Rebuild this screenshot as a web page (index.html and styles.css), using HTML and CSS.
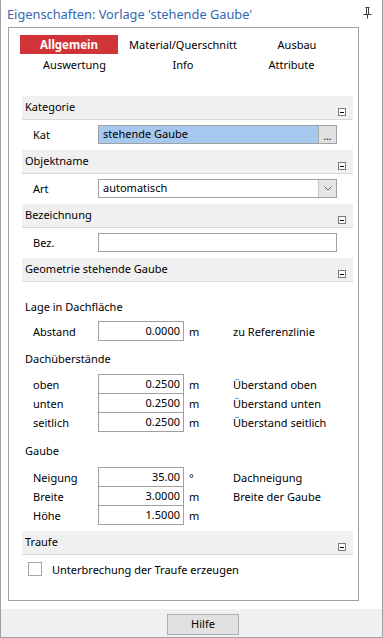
FILE: index.html
```html
<!DOCTYPE html>
<html lang="de">
<head>
<meta charset="utf-8">
<title>Eigenschaften</title>
<link rel="stylesheet" href="styles.css">
</head>
<body>
<div class="window">
  <div class="titlebar">
    <span class="title">Eigenschaften: Vorlage 'stehende Gaube'</span>
    <svg class="pin" width="9" height="12" viewBox="0 0 9 12">
      <path d="M2.5 0.5h4M3.5 0.5v7M5.5 0.5v7M0.5 7.5h8M4.5 7.5v4" stroke="#404040" stroke-width="1" fill="none"/>
    </svg>
  </div>
  <div class="panel">
    <div class="tabs">
      <div class="tab active">Allgemein</div>
      <div class="tab">Material/Querschnitt</div>
      <div class="tab">Ausbau</div>
      <div class="tab shift-r">Auswertung</div>
      <div class="tab">Info</div>
      <div class="tab shift-l">Attribute</div>
    </div>
    <div class="sections">
      <div class="sec-head"><span>Kategorie</span><span class="toggle"></span></div>
      <div class="prop-row">
        <span class="lbl">Kat</span>
        <div class="field">
          <span class="fill">stehende Gaube</span>
          <span class="dots">...</span>
        </div>
      </div>
      <div class="sec-head"><span>Objektname</span><span class="toggle"></span></div>
      <div class="prop-row">
        <span class="lbl">Art</span>
        <div class="field">
          <span class="val">automatisch</span>
          <span class="arrow">
            <svg width="8" height="5" viewBox="0 0 8 5"><path d="M0.5 0.5l3.5 3.5l3.5-3.5" stroke="#606060" fill="none"/></svg>
          </span>
        </div>
      </div>
      <div class="sec-head"><span>Bezeichnung</span><span class="toggle"></span></div>
      <div class="prop-row">
        <span class="lbl">Bez.</span>
        <div class="field"></div>
      </div>
      <div class="sec-head"><span>Geometrie stehende Gaube</span><span class="toggle"></span></div>
      <div class="group">
        <div class="group-title g-lage">Lage in Dachfläche</div>
        <div class="num-rows r-lage">
          <div class="num-row"><span class="lbl">Abstand</span><span class="num">0.0000</span><span class="unit">m</span><span class="desc">zu Referenzlinie</span></div>
        </div>
        <div class="group-title g-dach">Dachüberstände</div>
        <div class="num-rows r-dach">
          <div class="num-row"><span class="lbl">oben</span><span class="num">0.2500</span><span class="unit">m</span><span class="desc">Überstand oben</span></div>
          <div class="num-row"><span class="lbl">unten</span><span class="num">0.2500</span><span class="unit">m</span><span class="desc">Überstand unten</span></div>
          <div class="num-row"><span class="lbl">seitlich</span><span class="num">0.2500</span><span class="unit">m</span><span class="desc">Überstand seitlich</span></div>
        </div>
        <div class="group-title g-gaube">Gaube</div>
        <div class="num-rows r-gaube">
          <div class="num-row"><span class="lbl">Neigung</span><span class="num">35.00</span><span class="unit">°</span><span class="desc">Dachneigung</span></div>
          <div class="num-row"><span class="lbl">Breite</span><span class="num">3.0000</span><span class="unit">m</span><span class="desc">Breite der Gaube</span></div>
          <div class="num-row"><span class="lbl">Höhe</span><span class="num">1.5000</span><span class="unit">m</span><span class="desc"></span></div>
        </div>
      </div>
      <div class="sec-head traufe"><span>Traufe</span><span class="toggle"></span></div>
      <div class="check-row"><span class="box"></span><span>Unterbrechung der Traufe erzeugen</span></div>
    </div>
  </div>
  <div class="footer">
    <div class="btn">Hilfe</div>
  </div>
</div>
</body>
</html>
```
FILE: styles.css
```css
* { box-sizing: border-box; }
body {
  margin: 0;
  font-family: "Noto Sans", sans-serif;
  font-size: 11px;
  color: #000;
  background: #fff;
}
.window {
  width: 383px;
  height: 638px;
  border: 1px solid #a0a0a0;
  border-top: none;
  display: flex;
  flex-direction: column;
}
.titlebar {
  height: 27px;
  flex: none;
  display: flex;
  align-items: center;
  justify-content: space-between;
  padding: 0 10px 0 6px;
}
.title { color: #3468b0; font-size: 12.8px; }
.pin { margin-top: -2px; }
.panel {
  flex: none;
  margin-left: 7px;
  width: 351px;
  height: 574px;
  border: 1px solid #a0a0a0;
}
.tabs {
  display: grid;
  grid-template-columns: 98px 130px 98px;
  grid-auto-rows: 20px;
  margin: 7px 0 0 11px;
}
.tab {
  height: 19px;
  line-height: 19px;
  text-align: center;
  white-space: nowrap;
}
.tab.active {
  background: #d13438;
  color: #fff;
  font-weight: bold;
  font-size: 11.5px;
}
.tab.shift-r { padding-left: 11px; }
.tab.shift-l { padding-right: 11px; }
.sections { margin: 21px 5px 0 13px; }
.sec-head {
  height: 24px;
  background: #f0f0f0;
  border-bottom: 1px solid #d8d8d8;
  display: flex;
  justify-content: space-between;
  padding-left: 3px;
  line-height: 22px;
}
.toggle {
  width: 8px;
  height: 8px;
  border: 1px solid #7a7a7a;
  background: #fff;
  align-self: flex-end;
  margin: 0 7px 3px 0;
  display: flex;
  align-items: center;
  justify-content: center;
}
.toggle::after {
  content: "";
  width: 4px;
  height: 1px;
  background: #000;
}
.prop-row {
  display: flex;
  align-items: center;
  padding: 5px 0 6px 11px;
}
.lbl { width: 65px; flex: none; }
.field {
  width: 239px;
  height: 19px;
  border: 1px solid #a0a0a0;
  display: flex;
  background: #fff;
}
.fill {
  flex: 1;
  background: #a6c8ee;
  padding-left: 4px;
  line-height: 16px;
}
.dots {
  width: 18px;
  background: #e1e1e1;
  border-left: 1px solid #adadad;
  text-align: center;
  line-height: 20px;
  font-size: 10px;
}
.val { flex: 1; padding-left: 4px; line-height: 16px; }
.arrow {
  width: 18px;
  background: #e6e6e6;
  border-left: 1px solid #c8c8c8;
  display: flex;
  align-items: center;
  justify-content: center;
}
.group { padding-left: 3px; }
.group-title { line-height: 15px; }
.g-lage { margin-top: 17px; }
.g-dach { margin-top: 10px; }
.g-gaube { margin-top: 11px; }
.r-lage { margin-top: 7px; }
.r-dach { margin-top: 8px; }
.r-gaube { margin-top: 9px; }
.num-row {
  display: flex;
  align-items: center;
  height: 20px;
  padding-left: 8px;
  line-height: 17px;
}
.num-row + .num-row { margin-top: -1px; }
.num {
  width: 86px;
  height: 20px;
  border: 1px solid #a0a0a0;
  text-align: right;
  padding-right: 3px;
  line-height: 17px;
  flex: none;
}
.unit { width: 49px; padding-left: 5px; flex: none; }
.desc { white-space: nowrap; }
.sec-head.traufe { margin-top: 6px; }
.check-row {
  display: flex;
  align-items: center;
  padding: 7px 0 0 6px;
  line-height: 13px;
}
.box {
  width: 14px;
  height: 14px;
  border: 1px solid #a6a6a6;
  margin-right: 10px;
  flex: none;
}
.footer {
  flex: none;
  margin-top: 8px;
  height: 28px;
  background: #f0f0f0;
  padding: 5px 0 0 166px;
}
.btn {
  width: 72px;
  height: 21px;
  background: #e1e1e1;
  border: 1px solid #adadad;
  text-align: center;
  line-height: 18px;
}
```
